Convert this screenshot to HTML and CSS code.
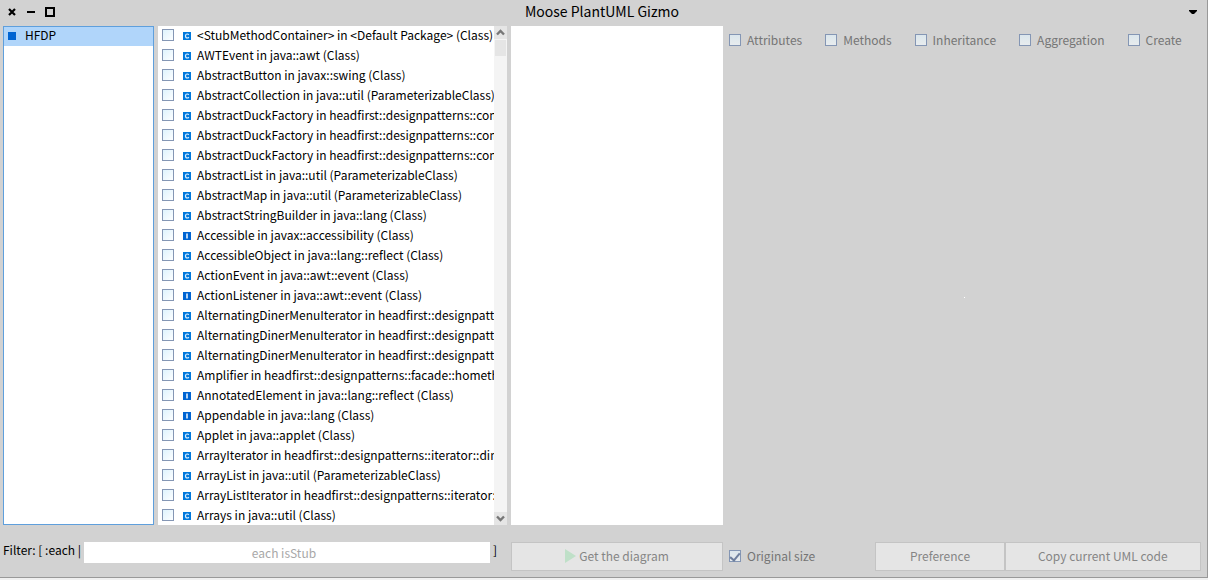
FILE: index.html
```html
<!DOCTYPE html>
<html lang="en">
<head>
<meta charset="utf-8">
<title>Moose PlantUML Gizmo</title>
<link rel="stylesheet" href="styles.css">
</head>
<body>
<main class="window">
  <header class="titlebar">
    <div class="window-controls">
      <button class="icon-button" aria-label="Close"><svg width="10" height="10" viewBox="0 0 10 10"><path d="M2 2l6 6M8 2l-6 6" stroke="#000" stroke-width="2.2"/></svg></button>
      <button class="icon-button" aria-label="Minimize"><svg width="10" height="10" viewBox="0 0 10 10"><path d="M1 5h8" stroke="#000" stroke-width="2"/></svg></button>
      <button class="icon-button" aria-label="Maximize"><svg width="10" height="10" viewBox="0 0 10 10"><path d="M1 1h8v8H1z" fill="none" stroke="#000" stroke-width="2"/></svg></button>
    </div>
    <h1 class="title">Moose PlantUML Gizmo</h1>
    <button class="icon-button menu-button" aria-label="Window menu"><svg width="8" height="4" viewBox="0 0 8 4"><path d="M0 0h8v1L5 4H3L0 1z" fill="#000"/></svg></button>
  </header>

  <div class="content">
    <ul class="pane models">
      <li class="model selected"><span class="model-icon"></span><span class="model-name">HFDP</span></li>
    </ul>

    <div class="pane entities">
      <ul class="entity-list" id="entities"></ul>
      <div class="scrollbar">
        <button class="scroll-button" aria-label="Scroll up"><svg width="9" height="7" viewBox="0 0 9 7"><path d="M1 5.5L4.500 2L8 5.500" fill="none" stroke="#777" stroke-width="2.4"/></svg></button>
        <div class="scroll-track"><div class="scroll-thumb"></div></div>
        <button class="scroll-button" aria-label="Scroll down"><svg width="9" height="7" viewBox="0 0 9 7"><path d="M1 1.500L4.500 5L8 1.500" fill="none" stroke="#777" stroke-width="2.4"/></svg></button>
      </div>
    </div>

    <div class="pane"></div>

    <section class="diagram">
      <div class="options">
        <label class="option"><input class="check" type="checkbox" disabled>Attributes</label>
        <label class="option"><input class="check" type="checkbox" disabled>Methods</label>
        <label class="option"><input class="check" type="checkbox" disabled>Inheritance</label>
        <label class="option"><input class="check" type="checkbox" disabled>Aggregation</label>
        <label class="option"><input class="check" type="checkbox" disabled>Create</label>
      </div>
      <div class="canvas"><span class="dot"></span></div>
    </section>

    <div class="filter">
      <label class="filter-text" for="filter">Filter: [ :each |</label>
      <input class="filter-input" id="filter" type="text" placeholder="each isStub">
      <span class="filter-text">]</span>
    </div>

    <button class="button" disabled><svg width="11" height="14" viewBox="0 0 11 14"><path d="M0 0l11 7-11 7z" fill="#bfe0c8"/></svg>Get the diagram</button>

    <div class="actions">
      <label class="option original-size"><input class="check" type="checkbox" checked disabled>Original size</label>
      <div class="button-group">
        <button class="button" disabled>Preference</button>
        <button class="button" disabled>Copy current UML code</button>
      </div>
    </div>
  </div>
</main>
<script src="script.js"></script>
</body>
</html>
```
FILE: styles.css
```css
* {
  box-sizing: border-box;
}

body {
  margin: 0;
  height: 100vh;
  padding-bottom: 2px;
  background: #f0f0f0;
  color: #000;
  font: 12px/20px "Noto Sans CJK SC", "Open Sans", sans-serif;
}

button,
input {
  font: inherit;
  margin: 0;
}

ul {
  list-style: none;
  margin: 0;
  padding: 0;
}

svg {
  display: block;
  flex: none;
}

.window {
  display: flex;
  flex-direction: column;
  height: 100%;
  background: #d2d2d2;
  border: solid #999;
  border-width: 0 1px 1px 0;
}

.titlebar {
  display: grid;
  grid-template-columns: 1fr auto 1fr;
  align-items: center;
  height: 26px;
  padding: 0 10px 2px 7px;
}

.window-controls {
  display: flex;
  gap: 9px;
}

.icon-button {
  display: flex;
  padding: 0;
  border: 0;
  background: none;
}

.menu-button {
  justify-self: end;
}

.title {
  margin: 0;
  padding-bottom: 2px;
  font-size: 14px;
  font-weight: 400;
}

.content {
  flex: 1;
  min-height: 0;
  display: grid;
  grid-template-columns: minmax(0, 151fr) minmax(0, 349fr) minmax(0, 212fr) minmax(0, 474fr);
  grid-template-rows: minmax(0, 1fr) auto;
  gap: 17px 4px;
  padding: 0 6px 6px 3px;
}

.pane {
  min-width: 0;
  overflow: hidden;
  background: #fff;
}

.models {
  border: 1px solid #5f9fdc;
}

.model {
  display: flex;
  align-items: center;
  gap: 9px;
  height: 19px;
  padding: 0 4px 2px;
}

.model-name {
  padding-bottom: 2px;
}

.selected {
  background: #b0d5fa;
}

.model-icon {
  width: 8px;
  height: 8px;
  background: #0064d2;
}

.entities {
  display: flex;
}

.entity-list {
  flex: 1;
  min-width: 0;
  overflow: hidden;
}

.entity {
  display: flex;
  align-items: center;
  height: 20px;
  padding: 0 0 2px 4px;
  white-space: nowrap;
}

.entity-icon {
  margin: 2px 6px 0 9px;
}

.check {
  appearance: none;
  flex: none;
  width: 12px;
  height: 12px;
  border: 1px solid #8496b4;
  background: linear-gradient(135deg, #def3fd, #fcfeff);
}

.check:disabled {
  background: linear-gradient(#dbe6ec, #e8ecee);
}

.check:checked::after {
  content: "";
  display: block;
  width: 4px;
  height: 8px;
  margin: 0 auto;
  border: solid #6e7f9e;
  border-width: 0 2px 2px 0;
  transform: rotate(40deg);
}

.scrollbar {
  display: flex;
  flex-direction: column;
  width: 13px;
  background: #f4f4f4;
}

.scroll-button {
  display: flex;
  align-items: center;
  justify-content: center;
  height: 13px;
  padding: 0;
  border: 0;
  background: #e5e5e5;
}

.scroll-track {
  flex: 1;
  padding: 1px 1px 0;
}

.scroll-thumb {
  height: 16px;
  background: #e5e5e5;
}

.diagram {
  display: flex;
  flex-direction: column;
  padding: 4px 2px 0;
}

.options {
  display: flex;
  gap: 23px;
}

.option {
  display: flex;
  align-items: center;
  gap: 6px;
  color: #757575;
}

.canvas {
  flex: 1;
  display: flex;
  align-items: center;
  justify-content: center;
  padding-top: 20px;
}

.dot {
  width: 1px;
  height: 1px;
  background: #fff;
}

.filter {
  grid-column: span 2;
  display: flex;
  align-items: center;
  align-self: start;
  height: 21px;
  padding-right: 10px;
}

.filter-text {
  padding-bottom: 6px;
}

.filter-input {
  flex: 1;
  min-width: 0;
  height: 21px;
  margin: 0 3px;
  padding: 0 6px 0 0;
  border: 0;
  background: #fff;
  text-align: center;
}

.filter-input::placeholder {
  color: #a8a8a8;
}

.button {
  display: flex;
  align-items: center;
  justify-content: center;
  gap: 3px;
  height: 29px;
  padding: 0 0 2px;
  border: 1px solid #c4c4c4;
  background: #e5e5e5;
  color: #858585;
}

.actions {
  display: flex;
  align-items: center;
  justify-content: space-between;
  padding-left: 2px;
}

.original-size {
  padding-bottom: 2px;
}

.button-group {
  display: grid;
  grid-template-columns: 129fr 196fr;
  width: 69%;
}
```
FILE: script.js
```js
const entities = [
  ["C", "<StubMethodContainer> in <Default Package> (Class)"],
  ["C", "AWTEvent in java::awt (Class)"],
  ["C", "AbstractButton in javax::swing (Class)"],
  ["C", "AbstractCollection in java::util (ParameterizableClass)"],
  ["C", "AbstractDuckFactory in headfirst::designpatterns::com"],
  ["C", "AbstractDuckFactory in headfirst::designpatterns::com"],
  ["C", "AbstractDuckFactory in headfirst::designpatterns::com"],
  ["C", "AbstractList in java::util (ParameterizableClass)"],
  ["C", "AbstractMap in java::util (ParameterizableClass)"],
  ["C", "AbstractStringBuilder in java::lang (Class)"],
  ["I", "Accessible in javax::accessibility (Class)"],
  ["C", "AccessibleObject in java::lang::reflect (Class)"],
  ["C", "ActionEvent in java::awt::event (Class)"],
  ["I", "ActionListener in java::awt::event (Class)"],
  ["C", "AlternatingDinerMenuIterator in headfirst::designpatte"],
  ["C", "AlternatingDinerMenuIterator in headfirst::designpatte"],
  ["C", "AlternatingDinerMenuIterator in headfirst::designpatte"],
  ["C", "Amplifier in headfirst::designpatterns::facade::hometh"],
  ["I", "AnnotatedElement in java::lang::reflect (Class)"],
  ["I", "Appendable in java::lang (Class)"],
  ["C", "Applet in java::applet (Class)"],
  ["C", "ArrayIterator in headfirst::designpatterns::iterator::din"],
  ["C", "ArrayList in java::util (ParameterizableClass)"],
  ["C", "ArrayListIterator in headfirst::designpatterns::iterator::"],
  ["C", "Arrays in java::util (Class)"]
];

const marks = {
  C: '<rect width="8" height="8" fill="#0078dc"/><path d="M5.800 2.900Q5.300 2 4.200 2Q2.500 2 2.500 4T4.200 6Q5.300 6 5.800 5.100" fill="none" stroke="#d5ecff" stroke-width="1.200"/>',
  I: '<rect width="8" height="8" fill="#0064d2"/><path d="M4 1.500v5" stroke="#e4f2ff" stroke-width="1.600"/>'
};

const list = document.getElementById("entities");
for (const [kind, name] of entities) {
  const item = document.createElement("li");
  const label = document.createElement("label");
  label.className = "entity";
  label.innerHTML = `<input class="check" type="checkbox"><svg class="entity-icon" width="8" height="8" viewBox="0 0 8 8">${marks[kind]}</svg>`;
  label.append(name);
  item.append(label);
  list.append(item);
}
```
